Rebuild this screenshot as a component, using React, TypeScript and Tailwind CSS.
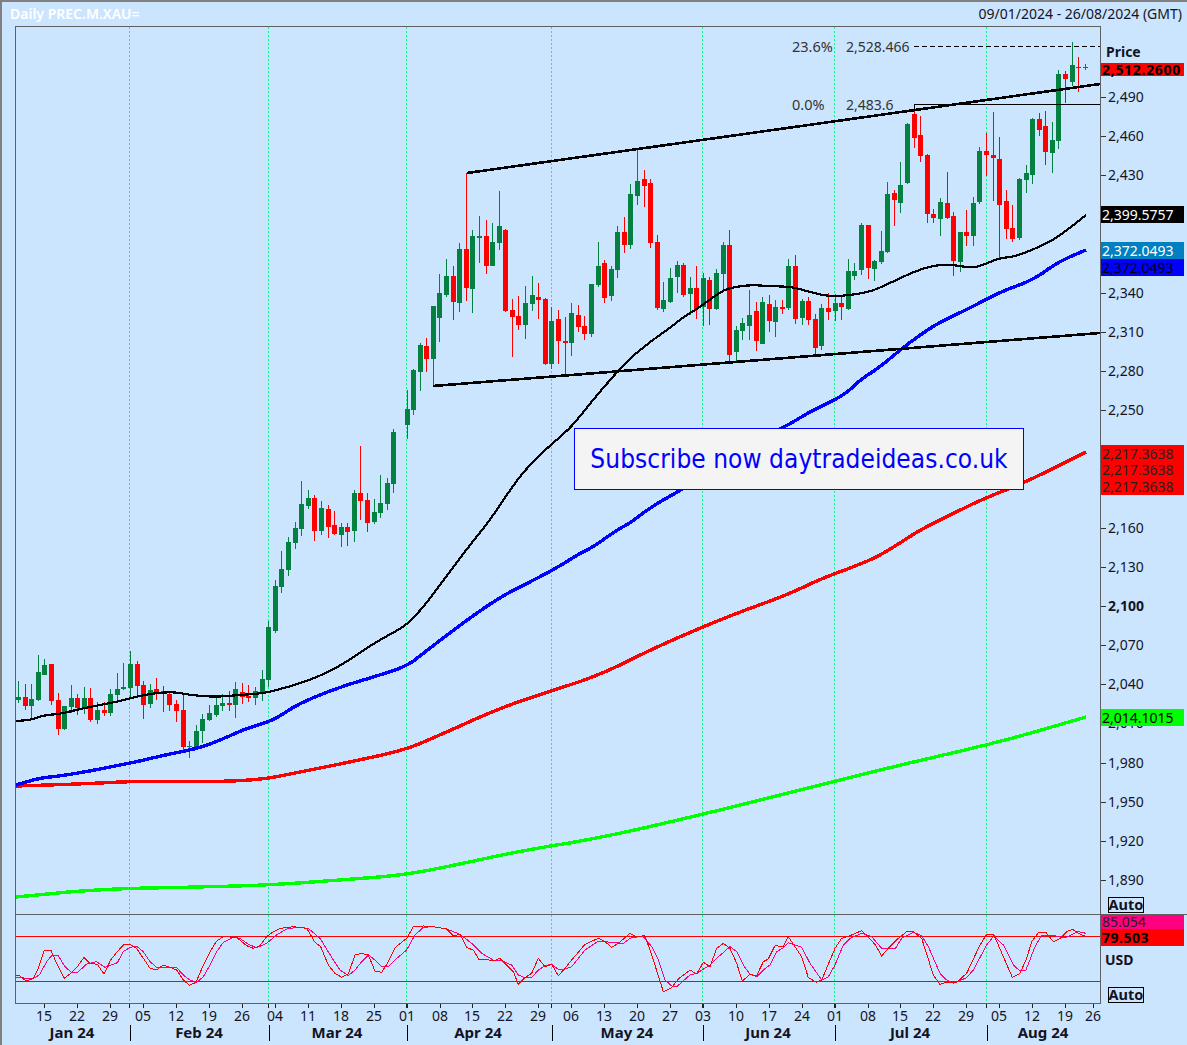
import React from "react";

type C = [number, number, number, number, number, "g" | "r"];

const candles: C[] = [
  [18,681,703,697,700,"g"],[25,684,710,697,706,"r"],[31,684,718,699,706,"g"],[38,655,701,672,700,"g"],
  [44,659,675,665,675,"g"],[51,664,705,664,701,"r"],[58,693,735,700,729,"r"],[64,706,730,706,729,"g"],
  [71,685,713,698,707,"g"],[77,694,715,698,708,"r"],[84,687,714,698,709,"g"],[90,688,722,698,720,"r"],
  [97,702,724,710,720,"g"],[104,702,716,710,713,"r"],[110,689,716,694,713,"g"],[117,673,700,689,695,"g"],
  [123,663,690,687,689,"g"],[130,651,699,664,688,"g"],[137,661,695,664,686,"r"],[143,681,719,685,705,"r"],
  [150,684,708,690,704,"g"],[156,678,700,689,692,"r"],[163,686,712,691,694,"r"],[169,691,711,694,705,"r"],
  [176,700,722,704,711,"r"],[183,695,750,710,747,"r"],[189,741,758,746,747,"g"],[196,725,747,731,747,"g"],
  [202,714,743,719,731,"g"],[209,705,721,713,720,"g"],[216,697,717,705,715,"g"],[222,694,711,703,706,"g"],
  [229,691,711,703,705,"r"],[235,682,718,689,705,"g"],[242,683,704,692,697,"r"],[248,685,702,696,698,"r"],
  [255,687,705,691,698,"g"],[262,670,701,679,692,"g"],[268,621,687,627,680,"g"],[275,580,633,586,631,"g"],
  [281,551,593,569,587,"g"],[288,537,576,542,570,"g"],[295,522,549,528,543,"g"],[301,481,536,504,529,"g"],
  [308,490,509,498,506,"g"],[314,495,541,498,531,"r"],[321,501,535,508,531,"g"],[328,505,538,509,527,"r"],
  [334,511,535,525,534,"r"],[341,523,547,527,535,"g"],[347,523,546,527,532,"r"],[354,490,542,493,531,"g"],
  [360,446,520,493,501,"r"],[367,493,532,500,523,"r"],[374,499,524,512,522,"g"],[380,475,518,503,513,"g"],
  [387,478,510,483,504,"g"],[393,429,493,432,484,"g"],[407,390,439,409,425,"g"],[413,369,415,370,410,"g"],
  [420,343,391,345,372,"g"],[426,338,372,346,359,"r"],[433,306,386,306,359,"g"],[439,274,342,293,318,"g"],
  [446,259,297,276,295,"g"],[453,266,320,276,302,"r"],[459,243,312,249,303,"g"],[466,173,301,249,288,"r"],
  [472,230,313,236,289,"g"],[479,216,263,236,238,"g"],[486,220,274,236,266,"r"],[492,223,266,242,266,"g"],
  [499,191,250,226,243,"g"],[505,229,312,230,311,"r"],[512,299,357,310,317,"r"],[518,296,330,316,325,"r"],
  [525,286,339,303,325,"g"],[532,276,311,295,304,"g"],[538,283,319,297,300,"r"],[545,298,365,299,364,"r"],
  [551,307,369,321,364,"g"],[558,310,364,319,341,"r"],[565,317,376,341,343,"r"],[571,303,356,313,343,"g"],
  [578,305,332,315,327,"r"],[584,316,340,326,334,"r"],[591,284,337,284,334,"g"],[598,242,287,266,285,"g"],
  [604,260,303,263,298,"r"],[611,266,301,269,296,"g"],[617,226,278,232,270,"g"],[624,217,253,232,245,"r"],
  [630,184,249,194,245,"g"],[637,150,205,181,196,"g"],[644,170,207,179,186,"r"],[650,179,248,183,243,"r"],
  [657,235,310,242,308,"r"],[663,282,312,300,309,"g"],[670,268,303,278,302,"g"],[677,261,293,265,277,"g"],
  [683,263,297,265,295,"r"],[690,277,315,288,294,"g"],[696,266,319,288,309,"r"],[703,273,326,278,307,"g"],
  [709,277,325,280,309,"r"],[716,269,310,273,309,"g"],[723,242,290,245,274,"g"],[729,230,362,245,355,"r"],
  [736,326,361,330,352,"g"],[742,318,340,323,331,"g"],[749,290,340,315,326,"g"],[756,302,351,311,341,"r"],
  [762,297,344,302,344,"g"],[769,295,332,304,321,"r"],[775,300,337,307,322,"g"],[782,300,314,307,309,"r"],
  [788,259,310,266,308,"g"],[795,255,324,266,319,"r"],[802,299,325,301,318,"g"],[808,297,325,301,320,"r"],
  [815,314,354,319,348,"r"],[821,304,350,308,346,"g"],[828,293,320,308,312,"r"],[835,294,321,303,311,"g"],
  [841,296,320,303,307,"r"],[848,259,310,271,309,"g"],[854,263,280,271,276,"g"],[861,223,275,225,270,"g"],
  [868,225,279,225,268,"r"],[874,260,281,261,269,"g"],[881,231,264,251,262,"g"],[887,182,253,194,252,"g"],
  [894,190,226,193,200,"r"],[900,162,213,185,203,"g"],[907,123,184,124,183,"g"],[914,104,148,114,138,"r"],
  [920,116,162,135,156,"r"],[927,154,223,155,214,"r"],[933,209,223,214,218,"r"],[940,198,236,202,219,"g"],
  [947,172,219,203,218,"r"],[953,212,276,216,261,"r"],[960,232,272,232,262,"g"],[966,210,246,232,236,"r"],
  [973,197,246,203,236,"g"],[979,147,204,151,202,"g"],[986,133,176,151,155,"r"],[993,112,201,155,158,"r"],
  [999,137,260,159,205,"r"],[1006,190,239,201,229,"r"],[1012,205,242,228,239,"r"],[1019,178,240,179,238,"g"],
  [1026,165,193,173,180,"g"],[1032,118,184,119,175,"g"],[1039,113,136,119,130,"r"],[1045,111,165,126,152,"r"],
  [1052,122,173,140,153,"g"],[1058,70,149,74,141,"g"],[1065,71,103,74,79,"r"],[1072,42,86,65,82,"g"],
  [1078,57,92,67,68,"r"],[1085,64,70,67,68,"g"],
];

const pts = (a: number[][]) => a.map((p) => p.join(",")).join(" ");

const smooth = (a: number[][], n = 2) => {
  let cur = a;
  for (let k = 0; k < n; k++) {
    const out: number[][] = [cur[0]];
    for (let i = 0; i < cur.length - 1; i++) {
      const [x0, y0] = cur[i];
      const [x1, y1] = cur[i + 1];
      out.push([x0 * 0.75 + x1 * 0.25, y0 * 0.75 + y1 * 0.25], [x0 * 0.25 + x1 * 0.75, y0 * 0.25 + y1 * 0.75]);
    }
    out.push(cur[cur.length - 1]);
    cur = out;
  }
  return cur;
};

const blackMA = [[16,721],[30,720],[45,715],[60,714],[80,709],[100,705],[120,701],[135,697],[155,693],[175,692],[190,695],[215,697],[240,695],[265,693],[280,689],[295,685],[320,676],[345,663],[365,649],[385,637],[407,625],[425,605],[445,578],[470,545],[490,520],[510,490],[525,470],[545,450],[560,437],[573,425],[593,400],[610,380],[628,360],[650,342],[667,330],[685,316],[700,307],[723,290],[735,287],[750,285],[770,286],[793,287],[810,292],[827,296],[843,296],[870,292],[890,283],[920,269],[943,264],[960,266],[973,268],[985,264],[1000,258],[1012,257],[1027,252],[1050,242],[1070,228],[1086,215]];
const blueMA = [[16,785],[40,778],[60,776],[90,771],[120,765],[140,761],[165,755],[190,750],[205,746],[225,738],[245,729],[268,722],[280,716],[300,703],[340,687],[380,675],[407,666],[425,652],[460,625],[500,597],[530,582],[560,566],[577,555],[593,547],[617,530],[630,523],[647,510],[663,500],[683,489],[720,462],[750,443],[783,428],[813,410],[835,400],[850,390],[860,380],[880,367],[900,350],[920,335],[940,322],[970,308],[1000,292],[1033,280],[1058,262],[1086,250]];
const redMA = [[16,786],[80,784],[140,781],[200,782],[260,780],[300,772],[350,762],[405,750],[440,735],[500,708],[545,693],[600,675],[650,650],[700,628],[740,612],[773,600],[793,592],[823,578],[853,567],[877,557],[900,543],[920,530],[950,515],[985,498],[1024,483],[1086,452]];
const limeMA = [[16,897],[100,889],[200,887],[270,885],[340,880],[405,875],[460,864],[520,851],[600,838],[700,815],[800,790],[900,765],[1000,742],[1086,717]];

const z8 = (a: number[][]) => a.map(([x, y]) => [x / 3, 905 + y / 3]);
const z9 = (a: number[][]) => a.map(([x, y]) => [500 + x / 3, 905 + y / 3]);
const z3 = (a: number[][]) => a.map(([x, y]) => [960 + x / 3, 890 + y / 3]);

const fast = [
  ...z8([[47,212],[60,213],[78,228],[100,220],[115,190],[133,136],[153,136],[172,180],[192,220],[212,205],[232,185],[252,157],[270,175],[292,178],[312,207],[332,165],[352,140],[370,120],[390,118],[410,130],[430,160],[450,190],[470,195],[490,180],[510,187],[530,195],[550,225],[568,241],[588,232],[610,180],[630,140],[650,108],[670,95],[710,97],[740,122],[760,130],[780,122],[800,95],[820,80],[840,70],[880,65],[920,70],[945,112],[962,125],[985,180],[1005,205],[1025,217],[1045,207],[1065,150],[1085,145],[1105,150],[1125,198],[1145,202],[1165,170],[1185,128],[1220,100],[1240,65],[1270,63],[1300,65],[1340,72],[1360,93],[1380,87],[1400,128],[1420,135],[1438,165],[1460,163],[1480,168]]),
  ...z9([[0,160],[40,200],[55,238],[75,218],[95,205],[115,160],[135,185],[155,178],[175,212],[195,190],[215,165],[255,118],[295,100],[315,110],[335,127],[355,115],[390,85],[410,95],[435,92],[460,165],[490,260],[515,248],[535,222],[570,195],[590,207],[610,172],[630,185],[650,130],[670,115],[690,130],[710,175],[727,228],[750,208],[770,212],[790,170],[805,162],[825,122],[850,125],[865,95],[885,125],[905,155],[925,218],[950,232],[965,225],[1005,130],[1025,100],[1050,92],[1085,77],[1125,118],[1145,153],[1165,130],[1195,100],[1220,80],[1240,80],[1265,100],[1300,210],[1320,238],[1340,232],[1370,232],[1400,205],[1440,120],[1460,88],[1480,88]]),
  ...z3([[105,142],[130,200],[157,262],[180,250],[200,205],[215,155],[235,128],[258,128],[280,155],[300,145],[320,125],[338,118],[355,130],[378,140]]),
];
const slow = [
  ...z8([[47,216],[78,220],[100,220],[118,210],[140,170],[155,152],[175,152],[195,185],[215,203],[232,203],[260,177],[290,170],[315,187],[352,173],[370,140],[390,127],[410,124],[430,140],[450,170],[470,187],[490,188],[530,188],[550,210],[570,225],[590,232],[610,215],[630,180],[650,140],[670,112],[700,97],[720,100],[745,118],[770,128],[800,115],[830,90],[860,72],[890,67],[925,70],[960,100],[1000,165],[1020,195],[1045,212],[1065,195],[1085,170],[1105,150],[1125,165],[1145,185],[1165,185],[1185,165],[1220,135],[1245,90],[1270,67],[1300,65],[1340,72],[1380,88],[1415,115],[1445,145],[1480,165]]),
  ...z9([[0,165],[35,180],[55,210],[75,218],[95,218],[115,195],[135,182],[155,178],[175,193],[195,192],[215,185],[255,135],[295,108],[335,112],[370,115],[395,97],[430,95],[455,125],[475,165],[495,225],[515,243],[530,245],[570,210],[590,205],[630,180],[650,160],[690,125],[710,140],[730,180],[750,208],[770,215],[790,195],[810,180],[830,140],[850,128],[865,113],[905,127],[930,175],[965,225],[985,215],[1005,180],[1030,120],[1050,100],[1085,85],[1115,95],[1145,130],[1185,132],[1205,100],[1240,82],[1265,92],[1285,125],[1320,205],[1340,225],[1360,235],[1400,218],[1420,195],[1460,120],[1480,95]]),
  ...z3([[105,142],[130,165],[160,225],[180,243],[198,240],[225,170],[245,135],[270,135],[315,143],[355,125],[378,130]]),
];

const verticals = [129.5, 268.5, 406.5, 551.5, 702.5, 834.5, 986.5];

const priceLabels: [string, number, boolean?][] = [
  ["2,490",97],["2,460",136],["2,430",175],["2,340",293],["2,310",332],["2,280",371],["2,250",410],
  ["2,160",528],["2,130",567],["2,100",606,true],["2,070",645],["2,040",684],["2,010",723],["1,980",763],["1,950",802],["1,920",841],["1,890",880],
];

const dayLabels: [string, number][] = [
  ["15",44],["22",77],["29",110],["05",143],["12",176],["19",209],["26",242],["04",275],["11",308],["18",341],["25",374],
  ["01",407],["08",440],["15",472],["22",505],["29",538],["06",571],["13",604],["20",637],["27",670],["03",703],["10",736],
  ["17",769],["24",802],["01",835],["08",868],["15",900],["22",933],["29",966],["05",999],["12",1032],["19",1065],["26",1093],
];
const monthLabels: [string, number][] = [
  ["Jan 24",72],["Feb 24",199],["Mar 24",337],["Apr 24",478],["May 24",627],["Jun 24",768],["Jul 24",910],["Aug 24",1043],
];

const Tag = ({ y, h, fill, ink, bold, sp, children }: { y: number; h: number; fill: string; ink: string; bold?: boolean; sp?: number; children: React.ReactNode }) => (
  <g>
    <rect x={1101} y={y} width={83} height={h} fill={fill} shapeRendering="crispEdges" />
    <text x={1102} y={y + h / 2 + 5} fill={ink} fontWeight={bold ? 700 : 400} letterSpacing={sp}>{children}</text>
  </g>
);

const AutoBox = ({ y }: { y: number }) => (
  <g>
    <rect x={1108.5} y={y + 0.5} width={35} height={15} fill="none" stroke="#000" shapeRendering="crispEdges" />
    <text x={1126} y={y + 13} textAnchor="middle" fontWeight={700} fontSize={14.5}>Auto</text>
  </g>
);

export default function App() {
  return (
    <div className="w-[1187px] h-[1045px] flex flex-col bg-[#cce5ff] border-t-2 border-l-2 border-[#808080] overflow-hidden text-[#14141e] fill-[#14141e] font-['Noto_Sans',sans-serif] text-[14px]">
      <div className="h-[24px] flex items-center justify-between pl-[8px] pr-[5px] pb-[1px]">
        <span className="text-white text-[14px] font-semibold">Daily PREC.M.XAU=</span>
        <span className="text-[14px]">09/01/2024 - 26/08/2024 (GMT)</span>
      </div>

      <div className="h-[888px] flex pl-[13px]">
        <div className="relative w-[1172px] h-[888px]">
          <svg className="block" width={1172} height={888} viewBox="15 26 1172 888">
            <path d="M15.5 914V26.5H1100.5V914" fill="none" stroke="#606060" shapeRendering="crispEdges" />
            {verticals.map((x) => (
              <line key={x} x1={x} x2={x} y1={27} y2={914} stroke="#00ff80" strokeDasharray="2 2" shapeRendering="crispEdges" />
            ))}
            <g shapeRendering="crispEdges">
              {candles.map(([x, wt, wb, bt, bb, c], i) => (
                <g key={i} fill={c === "g" ? "#048040" : "#ff0000"}>
                  <rect x={x} y={wt} width={1} height={wb - wt} />
                  <rect x={x - 2} y={bt} width={5} height={Math.max(bb - bt, 1)} />
                </g>
              ))}
            </g>
            <g fill="none" shapeRendering="crispEdges">
              <polyline points={pts(smooth(limeMA))} stroke="#00ff00" strokeWidth={3.4} />
              <polyline points={pts(smooth(redMA))} stroke="#ff0000" strokeWidth={3.4} />
              <polyline points={pts(smooth(blueMA))} stroke="#0000ff" strokeWidth={3.4} />
              <polyline points={pts(smooth(blackMA))} stroke="#000000" strokeWidth={2.2} />
              <line x1={467} y1={173} x2={1100} y2={84} stroke="#000" strokeWidth={2.6} />
              <line x1={433} y1={386} x2={1100} y2={333} stroke="#000" strokeWidth={2.6} />
              <line x1={914} y1={46.5} x2={1100} y2={46.5} stroke="#000" strokeDasharray="5 3" />
              <path d="M914.5 110V104.5H1100" stroke="#000" />
            </g>
            <g fill="#333" fontSize={14}>
              <text x={792} y={52} fontSize={14.5}>23.6%</text>
              <text x={846} y={52}>2,528.466</text>
              <text x={792} y={110} fontSize={14.5}>0.0%</text>
              <text x={846} y={110}>2,483.6</text>
            </g>
            <g fontSize={14}>
              <text x={1106} y={57} fontWeight={700}>Price</text>
              {priceLabels.map(([t, y, b]) => (
                <g key={t}>
                  <rect x={1101} y={y} width={5} height={1} fill="#333" shapeRendering="crispEdges" />
                  <text x={1108} y={y + 5} fontWeight={b ? 700 : 400}>{t}</text>
                </g>
              ))}
              <Tag y={63} h={13} fill="#ff0000" ink="#000" bold sp={0.7}>2,512.2600</Tag>
              <Tag y={206} h={17} fill="#000000" ink="#fff">2,399.5757</Tag>
              <Tag y={242} h={17} fill="#0080c0" ink="#fff">2,372.0493</Tag>
              <Tag y={259} h={17} fill="#0000ff" ink="#000">2,372.0493</Tag>
              <Tag y={445} h={17} fill="#ff0000" ink="#222">2,217.3638</Tag>
              <Tag y={462} h={16} fill="#ff0000" ink="#222">2,217.3638</Tag>
              <Tag y={478} h={17} fill="#ff0000" ink="#222">2,217.3638</Tag>
              <Tag y={709} h={17} fill="#00ff00" ink="#000">2,014.1015</Tag>
              <AutoBox y={897} />
            </g>
          </svg>
          <div className="absolute left-[559px] top-[402px] w-[450px] h-[62px] bg-[#f4f4f4] border border-[#0000ff] flex items-center justify-center text-[#0000ff] text-[26px] leading-none tracking-[0.05px] font-['DejaVu_Sans_Condensed','DejaVu_Sans',sans-serif]">
            Subscribe now daytradeideas.co.uk
          </div>
        </div>
      </div>

      <div className="h-[90px] flex pl-[13px]">
        <svg className="block" width={1172} height={90} viewBox="15 914 1172 90">
          <path d="M15 914.5H1187" stroke="#606060" shapeRendering="crispEdges" />
          <path d="M15.5 914V1003.5H1100.5V914" fill="none" stroke="#606060" shapeRendering="crispEdges" />
          {verticals.map((x) => (
            <line key={x} x1={x} x2={x} y1={915} y2={1003} stroke="#00ff80" strokeDasharray="2 2" shapeRendering="crispEdges" />
          ))}
          <g fill="none" shapeRendering="crispEdges">
            <line x1={16} x2={1100} y1={936.5} y2={936.5} stroke="#ff0000" />
            <line x1={16} x2={1100} y1={981.5} y2={981.5} stroke="#ff0000" />
            <polyline points={pts(slow)} stroke="#ff0080" />
            <polyline points={pts(fast)} stroke="#ff0000" />
          </g>
          <g fontSize={14}>
            <Tag y={915} h={14} fill="#ff0080" ink="#222">85.054</Tag>
            <Tag y={929} h={17} fill="#ff0000" ink="#000" bold sp={0.5}>79.503</Tag>
            <text x={1105} y={965} fontWeight={700}>USD</text>
            <AutoBox y={987} />
          </g>
        </svg>
      </div>

      <div className="h-[41px]">
        <svg className="block" width={1185} height={41} viewBox="2 1004 1185 41">
          <g shapeRendering="crispEdges" fill="#222">
            {dayLabels.map(([t, x], i) => (
              <rect key={`${t}${i}`} x={x} y={1004} width={1} height={4} />
            ))}
            {verticals.map((x) => (
              <g key={x}>
                <rect x={x - 0.5} y={1004} width={1} height={4} />
                <rect x={x} y={1025} width={1} height={16} fill="#000" />
              </g>
            ))}
          </g>
          <g fontSize={14}>
            {dayLabels.map(([t, x], i) => (
              <text key={`${t}${i}`} x={x} y={1021} textAnchor="middle">{t}</text>
            ))}
            {monthLabels.map(([t, x]) => (
              <text key={t} x={x} y={1038} textAnchor="middle" fontWeight={700} fontSize={15}>{t}</text>
            ))}
          </g>
        </svg>
      </div>
    </div>
  );
}
